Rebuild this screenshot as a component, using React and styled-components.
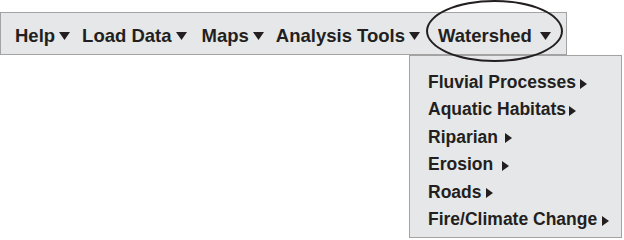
import React from 'react';
import styled, { createGlobalStyle } from 'styled-components';

const GlobalStyle = createGlobalStyle`
  html, body {
    margin: 0;
    padding: 0;
    background: #ffffff;
  }
  body {
    font-family: "Liberation Sans", Arial, sans-serif;
    color: #231f20;
  }
`;

const Page = styled.div`
  position: relative;
  width: 624px;
  height: 240px;
  padding-top: 12px;
  box-sizing: border-box;
  overflow: hidden;
`;

const MenuBar = styled.div`
  display: inline-flex;
  align-items: center;
  box-sizing: border-box;
  width: 567px;
  height: 43px;
  padding: 5px 0 0 14px;
  background: #e6e7e8;
  border: 1px solid #a3a3a3;
`;

const MenuItem = styled.div`
  display: flex;
  align-items: center;
  gap: ${(p) => p.$gap || 4}px;
  margin-right: ${(p) => p.$after || 12}px;
  font-size: 18.5px;
  font-weight: bold;
  line-height: 36px;
  white-space: nowrap;
`;

/* hand-drawn circle around the Watershed menu, over the bar and dropdown */
const Highlight = styled.span`
  position: absolute;
  left: 426px;
  top: 0;
  width: 133px;
  height: 58px;
  border: 2px solid #231f20;
  border-radius: 50%;
  z-index: 2;
  pointer-events: none;
`;

const Dropdown = styled.div`
  box-sizing: border-box;
  margin-left: 409px;
  width: 213px;
  height: 183px;
  padding: 13px 0 0 18px;
  background: #e6e7e8;
  border: 1px solid #a3a3a3;
`;

const SubItem = styled.div`
  display: flex;
  align-items: center;
  gap: ${(p) => p.$gap || 4}px;
  height: 27.4px;
  font-size: 17.5px;
  font-weight: bold;
  line-height: 27.4px;
  white-space: nowrap;
`;

const DownArrow = () => (
  <svg width="11" height="8" viewBox="0 0 11 8">
    <polygon points="0,0 11,0 5.5,8" fill="#231f20" />
  </svg>
);

const RightArrow = styled(({ className }) => (
  <svg className={className} width="7" height="10" viewBox="0 0 7 10">
    <polygon points="0,0 7,5 0,10" fill="#231f20" />
  </svg>
))`
  margin-top: 2px;
`;

const topItems = [
  { label: 'Help', after: 12 },
  { label: 'Load Data', after: 15 },
  { label: 'Maps', after: 12 },
  { label: 'Analysis Tools', after: 18 },
];

const subItems = [
  { label: 'Fluvial Processes', gap: 4 },
  { label: 'Aquatic Habitats', gap: 3 },
  { label: 'Riparian', gap: 7 },
  { label: 'Erosion', gap: 9 },
  { label: 'Roads', gap: 5 },
  { label: 'Fire/Climate Change', gap: 5 },
];

export default function App() {
  return (
    <Page>
      <GlobalStyle />
      <MenuBar>
        {topItems.map((item) => (
          <MenuItem key={item.label} $after={item.after}>
            {item.label}
            <DownArrow />
          </MenuItem>
        ))}
        <MenuItem $gap={8} $after={0}>
          Watershed
          <DownArrow />
        </MenuItem>
      </MenuBar>
      <Dropdown>
        {subItems.map((item) => (
          <SubItem key={item.label} $gap={item.gap}>
            {item.label}
            <RightArrow />
          </SubItem>
        ))}
      </Dropdown>
      <Highlight />
    </Page>
  );
}
